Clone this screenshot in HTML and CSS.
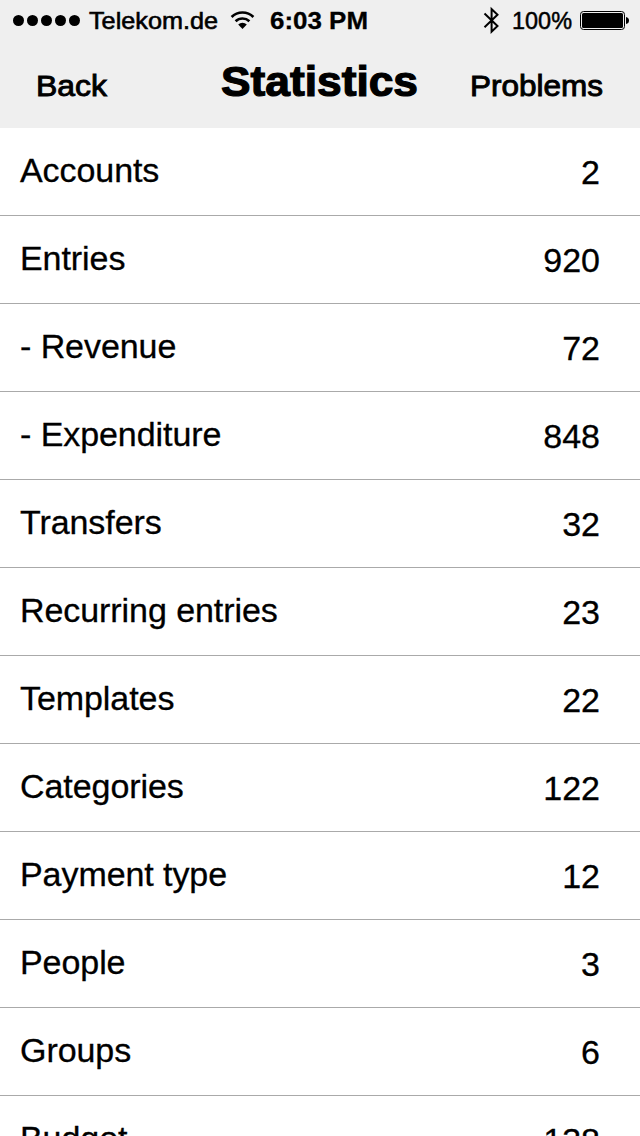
FILE: index.html
```html
<!DOCTYPE html>
<html lang="en"><head><meta charset="utf-8"><title>Statistics</title><link rel="stylesheet" href="styles.css"></head>
<body>
<header class="header">
<div class="status">
<svg class="signal" width="68" height="12" viewBox="0 0 68 12"><circle cx="5.5" cy="6.5" r="5.5"/><circle cx="19.5" cy="6.5" r="5.5"/><circle cx="33.5" cy="6.5" r="5.5"/><circle cx="47.5" cy="6.5" r="5.5"/><circle cx="61.5" cy="6.5" r="5.5"/></svg>
<svg class="carrier" width="130" height="40"><text x="0" y="29" textLength="129" lengthAdjust="spacingAndGlyphs">Telekom.de</text></svg>
<svg class="wifi" width="26" height="20" viewBox="0 0 26 20"><path d="M1.6 7a15.6 15.6 0 0 1 21.8 0M5.6 11.2a10 10 0 0 1 13.8 0" fill="none" stroke="#000" stroke-width="2.6"/><path d="M8.2 14.6a6.2 6.2 0 0 1 8.6 0L12.500 19z"/></svg>
<svg class="clock" width="99" height="40"><text x="0" y="29" textLength="98" lengthAdjust="spacingAndGlyphs">6:03 PM</text></svg>
<svg class="bluetooth" width="17" height="28" viewBox="0 0 17 28"><path d="M1.500 7.500L14.500 20 8.600 25.700V3L14.500 8.700 1.500 21.200" fill="none" stroke="#000" stroke-width="2"/></svg>
<svg class="percent" width="61" height="40"><text x="0" y="29" textLength="60" lengthAdjust="spacingAndGlyphs">100%</text></svg>
<svg class="battery" width="50" height="20" viewBox="0 0 50 20"><rect x=".5" y="1.500" width="44" height="18" rx="3" fill="none" stroke="#000"/><rect x="2" y="3" width="41" height="15" rx="1.500"/><path d="M46 7q3 .5 3 3.500t-3 3.500z"/></svg>
</div>
<nav class="nav">
<svg class="back" width="72" height="40"><text x="0" y="30" textLength="71" lengthAdjust="spacingAndGlyphs">Back</text></svg>
<svg class="title" width="200" height="48"><text x="0" y="36" textLength="197" lengthAdjust="spacingAndGlyphs">Statistics</text></svg>
<svg class="problems" width="134" height="40"><text x="0" y="30" textLength="133" lengthAdjust="spacingAndGlyphs">Problems</text></svg>
</nav></header>
<main class="list">
<div class="row"><span class="label">Accounts</span><span class="value">2</span></div>
<div class="row"><span class="label">Entries</span><span class="value">920</span></div>
<div class="row"><span class="label">- Revenue</span><span class="value">72</span></div>
<div class="row"><span class="label">- Expenditure</span><span class="value">848</span></div>
<div class="row"><span class="label">Transfers</span><span class="value">32</span></div>
<div class="row"><span class="label">Recurring entries</span><span class="value">23</span></div>
<div class="row"><span class="label">Templates</span><span class="value">22</span></div>
<div class="row"><span class="label">Categories</span><span class="value">122</span></div>
<div class="row"><span class="label">Payment type</span><span class="value">12</span></div>
<div class="row"><span class="label">People</span><span class="value">3</span></div>
<div class="row"><span class="label">Groups</span><span class="value">6</span></div>
<div class="row"><span class="label">Budget</span><span class="value">138</span></div>
</main></body></html>
```
FILE: styles.css
```css
*{box-sizing:border-box}
body{margin:0;height:1136px;overflow:hidden;background:#fff;color:#000;font-family:"Liberation Sans",Arial,sans-serif}
svg{display:block;flex:none;overflow:visible}
.header{height:128px;background:#efefef}
.status{height:40px;display:flex;align-items:center;padding-left:13px;font-size:24px}
.carrier{margin-left:8px;stroke:#000;stroke-width:.6px}
.wifi{margin-left:11px}
.clock{margin-left:14px;font-weight:700;stroke:#000;stroke-width:.3px}
.bluetooth{margin-left:114px}
.percent{margin-left:12px;stroke:#000;stroke-width:.5px}
.battery{margin-left:7px}
.nav{height:88px;display:flex;padding-left:36px}
.back,.problems{margin-top:26px;font-size:29px;stroke:#000;stroke-width:.9px}
.title{margin:20px 0 0 113px;font-size:42px;font-weight:700;stroke:#000;stroke-width:1.2px}
.problems{margin-left:49px}
.row{height:88px;display:flex;justify-content:space-between;border-bottom:1px solid #aaa;padding:22px 40px 0 20px;font-size:34px;line-height:40px;-webkit-text-stroke:.3px #000}
.label{letter-spacing:-.07px}
.value{padding-top:2px}
```
